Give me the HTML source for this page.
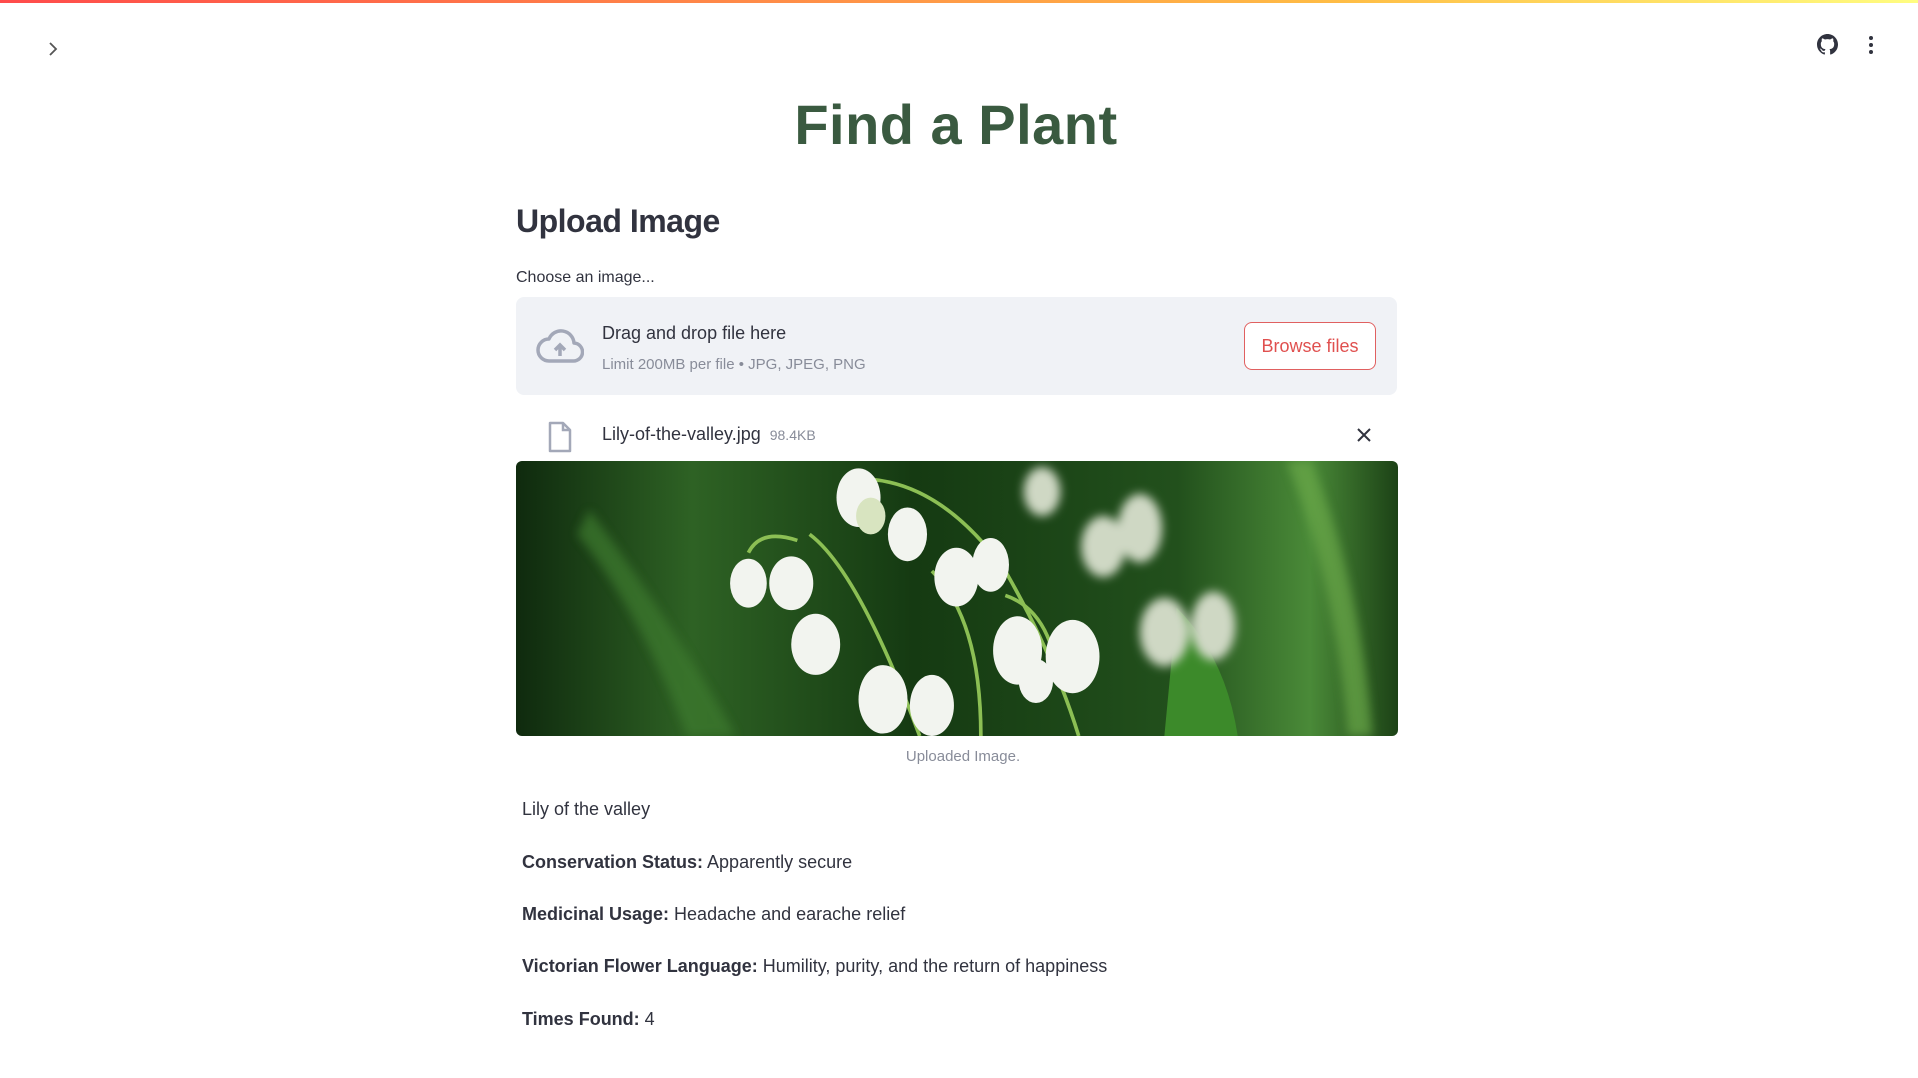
<!DOCTYPE html>
<html><head><meta charset="utf-8"><style>
*{margin:0;padding:0;box-sizing:border-box}
body{width:1918px;height:1078px;background:#fff;font-family:"Liberation Sans",sans-serif;color:#31333f;position:relative;overflow:hidden}
.bar{position:absolute;left:0;top:0;width:1918px;height:3px;background:linear-gradient(90deg,#ff4b4b,#ffbd45 70%,#fffd80)}
.abs{position:absolute;white-space:nowrap}
</style></head><body>
<div class="bar"></div>
<svg class="abs" style="left:45px;top:41px" width="16" height="16" viewBox="0 0 16 16"><path d="M5 2l6 6-6 6" fill="none" stroke="#555" stroke-width="1.8"/></svg>
<svg class="abs" style="left:1817px;top:34px" width="21" height="21" viewBox="0 0 16 16"><path fill="#31333f" d="M8 0C3.58 0 0 3.580 0 8c0 3.54 2.29 6.53 5.47 7.59.4.07.55-.17.55-.38v-1.33c-2.230.48-2.7-1.07-2.7-1.07-.36-.92-.89-1.17-.89-1.17-.73-.5.05-.49.05-.49.8.06 1.23.83 1.23.83.72 1.22 1.87.87 2.33.66.07-.52.28-.87.51-1.07-1.78-.2-3.64-.89-3.64-3.95 0-.87.31-1.59.82-2.15-.08-.2-.36-1.02.08-2.12 0 0 .67-.21 2.2.82a7.6 7.6 0 014 0c1.53-1.04 2.2-.82 2.2-.82.44 1.1.16 1.92.08 2.12.51.56.82 1.27.82 2.15 0 3.07-1.87 3.75-3.65 3.95.29.25.54.73.54 1.48v2.2c0 .21.15.46.55.38A8 8 0 0016 8c0-4.42-3.58-8-8-8z"/></svg>
<svg class="abs" style="left:1866px;top:35px" width="10" height="20" viewBox="0 0 10 20"><circle cx="5" cy="3" r="2" fill="#31333f"/><circle cx="5" cy="10" r="2" fill="#31333f"/><circle cx="5" cy="17" r="2" fill="#31333f"/></svg>

<div class="abs" style="left:0;width:1912px;text-align:center;top:92px;font-size:56px;font-weight:bold;color:#3a5a40;letter-spacing:0.5px">Find a Plant</div>
<div class="abs" style="left:516px;top:203px;font-size:32px;font-weight:bold;letter-spacing:-0.5px">Upload Image</div>
<div class="abs" style="left:516px;top:269px;font-size:16px">Choose an image...</div>

<div class="abs" style="left:516px;top:297px;width:881px;height:98px;background:#f0f2f6;border-radius:8px"></div>
<svg class="abs" style="left:536px;top:327px" width="48" height="38" viewBox="0 0 48 38"><path d="M13 34h24a9 9 0 001-18A13 13 0 0013 12 11 11 0 0013 34z" fill="none" stroke="#a3a8b8" stroke-width="3.5" stroke-linejoin="round"/><path d="M24 29V18m-5 5l5-5 5 5" fill="none" stroke="#a3a8b8" stroke-width="3.5"/></svg>
<div class="abs" style="left:602px;top:323px;font-size:18px">Drag and drop file here</div>
<div class="abs" style="left:602px;top:356px;font-size:15px;color:#888c99">Limit 200MB per file • JPG, JPEG, PNG</div>
<div class="abs" style="left:1244px;top:322px;width:132px;height:48px;border:1px solid #e06060;border-radius:8px;background:#fff;color:#e0504f;font-size:18px;text-align:center;line-height:46px">Browse files</div>

<svg class="abs" style="left:547px;top:421px" width="26" height="32" viewBox="0 0 26 32"><path d="M3 2h13l7 7v21H3z" fill="none" stroke="#a3a8b8" stroke-width="2.5" stroke-linejoin="round"/><path d="M16 2v7h7" fill="none" stroke="#a3a8b8" stroke-width="2.5"/></svg>
<div class="abs" style="left:602px;top:424px;font-size:18px">Lily-of-the-valley.jpg <span style="font-size:14px;color:#888c99;margin-left:4px">98.4KB</span></div>
<svg class="abs" style="left:1356px;top:427px" width="16" height="16" viewBox="0 0 16 16"><path d="M2 2l12 12M14 2L2 14" stroke="#31333f" stroke-width="2"/></svg>

<svg class="abs" style="left:516px;top:461px;border-radius:6px" width="882" height="275" viewBox="0 0 721 225" preserveAspectRatio="none">
<defs><linearGradient id="g" x1="0" x2="1"><stop offset="0" stop-color="#0f2a0e"/><stop offset=".2" stop-color="#2e6224"/><stop offset=".45" stop-color="#153a12"/><stop offset=".75" stop-color="#22501c"/><stop offset=".9" stop-color="#4a8a38"/><stop offset="1" stop-color="#1c4216"/></linearGradient>
<filter id="b"><feGaussianBlur stdDeviation="4"/></filter></defs>
<rect width="721" height="225" fill="url(#g)"/>
<path d="M60 40Q120 120 180 225H140Q100 120 50 60z" fill="#3e7a2e" filter="url(#b)" opacity=".7"/>
<path d="M650 0Q690 100 700 225H680Q670 100 630 0z" fill="#6aa84a" filter="url(#b)" opacity=".7"/>
<path d="M540 120Q580 160 590 225H530z" fill="#3c8a2a"/>
<g fill="none" stroke="#8cbf54" stroke-width="3"><path d="M240 60Q280 90 330 225"/><path d="M290 15Q350 20 400 90Q440 160 460 225"/><path d="M190 75Q200 55 230 65"/><path d="M340 90Q380 130 380 225"/><path d="M400 110Q430 120 440 160"/></g>
<g fill="#f2f4ef"><ellipse cx="190" cy="100" rx="15" ry="20"/><ellipse cx="225" cy="100" rx="18" ry="22"/><ellipse cx="280" cy="30" rx="18" ry="24"/><ellipse cx="290" cy="45" rx="12" ry="15" fill="#d8e4c0"/><ellipse cx="320" cy="60" rx="16" ry="22"/><ellipse cx="360" cy="95" rx="18" ry="24"/><ellipse cx="388" cy="85" rx="15" ry="22"/><ellipse cx="245" cy="150" rx="20" ry="25"/><ellipse cx="300" cy="195" rx="20" ry="28"/><ellipse cx="340" cy="200" rx="18" ry="25"/><ellipse cx="410" cy="155" rx="20" ry="28"/><ellipse cx="455" cy="160" rx="22" ry="30"/><ellipse cx="425" cy="180" rx="14" ry="18"/></g>
<g fill="#cfd8c4" filter="url(#b)"><ellipse cx="530" cy="140" rx="20" ry="28"/><ellipse cx="570" cy="135" rx="18" ry="28"/><ellipse cx="480" cy="70" rx="18" ry="25"/><ellipse cx="510" cy="55" rx="18" ry="28"/><ellipse cx="430" cy="25" rx="15" ry="20"/></g>
</svg>
<div class="abs" style="left:0;width:1926px;text-align:center;top:748px;font-size:15px;color:#888c99">Uploaded Image.</div>

<div class="abs" style="left:522px;top:799px;font-size:18px">Lily of the valley</div>
<div class="abs" style="left:522px;top:852px;font-size:18px"><b>Conservation Status:</b> Apparently secure</div>
<div class="abs" style="left:522px;top:904px;font-size:18px"><b>Medicinal Usage:</b> Headache and earache relief</div>
<div class="abs" style="left:522px;top:956px;font-size:18px"><b>Victorian Flower Language:</b> Humility, purity, and the return of happiness</div>
<div class="abs" style="left:522px;top:1009px;font-size:18px"><b>Times Found:</b> 4</div>
</body></html>
